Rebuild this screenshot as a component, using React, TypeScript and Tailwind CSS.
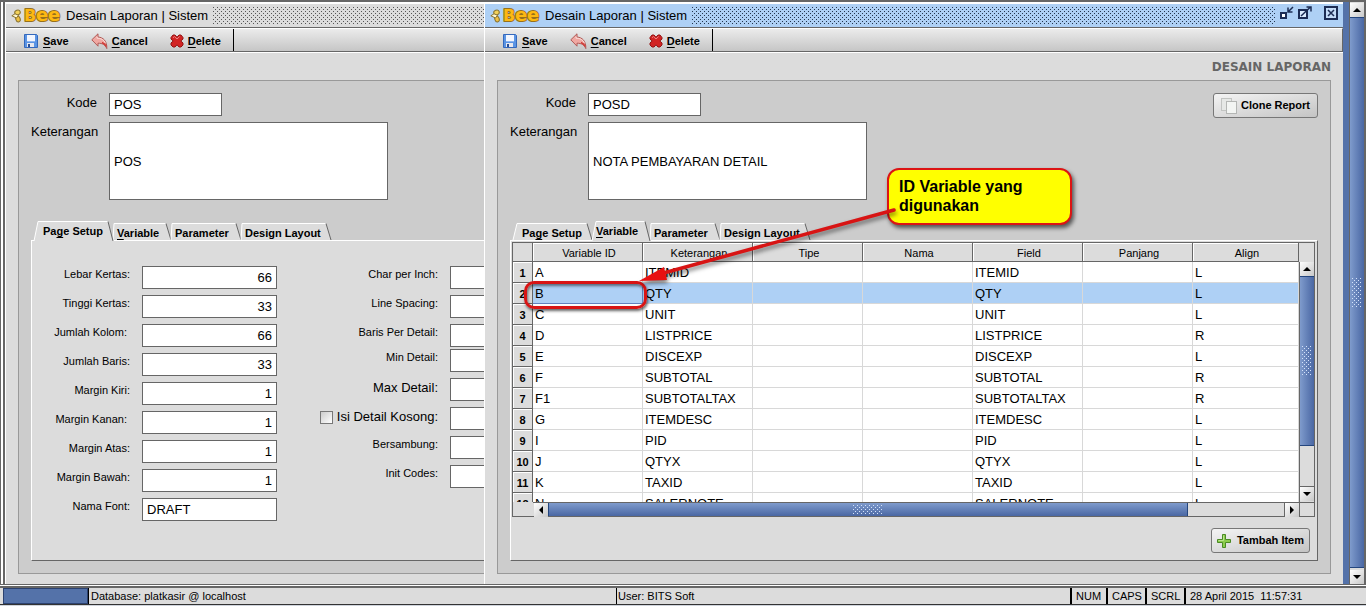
import type { ReactNode } from "react";

/* ---------- data ---------- */

type VariableRow = { id: string; keterangan: string; align: "L" | "R" };

const variables: VariableRow[] = [
  { id: "A", keterangan: "ITEMID", align: "L" },
  { id: "B", keterangan: "QTY", align: "L" },
  { id: "C", keterangan: "UNIT", align: "L" },
  { id: "D", keterangan: "LISTPRICE", align: "R" },
  { id: "E", keterangan: "DISCEXP", align: "L" },
  { id: "F", keterangan: "SUBTOTAL", align: "R" },
  { id: "F1", keterangan: "SUBTOTALTAX", align: "R" },
  { id: "G", keterangan: "ITEMDESC", align: "L" },
  { id: "I", keterangan: "PID", align: "L" },
  { id: "J", keterangan: "QTYX", align: "L" },
  { id: "K", keterangan: "TAXID", align: "L" },
  { id: "N", keterangan: "SALERNOTE", align: "L" },
];

const pageFields = [
  { label: "Lebar Kertas:", value: "66" },
  { label: "Tinggi Kertas:", value: "33" },
  { label: "Jumlah Kolom:\u00a0", value: "66" },
  { label: "Jumlah Baris:", value: "33" },
  { label: "Margin Kiri:", value: "1" },
  { label: "Margin Kanan:\u00a0", value: "1" },
  { label: "Margin Atas:", value: "1" },
  { label: "Margin Bawah:", value: "1" },
];

const tabs = [
  { pre: "Pa", key: "g", post: "e Setup", width: 79, cls: "w-[79px] pl-[9px]" },
  { pre: "", key: "V", post: "ariable", width: 58, cls: "w-[58px] pl-1" },
  { pre: "Parameter", key: "", post: "", width: 70, cls: "w-[70px] pl-1" },
  { pre: "Design Layout", key: "", post: "", width: 90, cls: "w-[90px] pl-1" },
];

/* ---------- icons ---------- */

function BeeLogo() {
  return (
    <svg className="overflow-visible" width="52" height="18" viewBox="0 0 52 18" role="img" aria-label="Bee">
      <g stroke="#8a7430">
        <ellipse cx="6.500" cy="5.500" rx="2.800" ry="2.400" fill="#f3d25a" transform="rotate(-20 6.500 5.500)" />
        <ellipse cx="7" cy="12" rx="2.200" ry="3" fill="#f0c040" transform="rotate(-20 7 12)" />
        <path d="M.8 8.800 4 6.800l3.500 1.400L5.500 11z" fill="#fff6cc" />
      </g>
      <g
        fill="#fcb813"
        stroke="#96701c"
        strokeWidth="2"
        strokeLinejoin="round"
        fontFamily="'DejaVu Sans', sans-serif"
        fontWeight="700"
        style={{ paintOrder: "stroke" }}
      >
        <text x="13" y="14" fontSize="16">B</text>
        <text x="25" y="14" fontSize="18">e</text>
        <text x="37" y="14" fontSize="18">e</text>
      </g>
    </svg>
  );
}

function SaveIcon() {
  return (
    <svg width="16" height="16" viewBox="0 0 16 16" aria-hidden="true">
      <path d="M1.500 1.500h12l1 1v12h-13z" fill="#5a94e4" stroke="#3468bc" />
      <rect x="4" y="2" width="8" height="6" fill="#f2f6ff" />
      <path d="M4 8.500h8" stroke="#8db4ee" />
      <rect x="4" y="10" width="7" height="4" fill="#e8e8ee" />
      <rect x="5" y="11" width="2" height="3" fill="#2a4f96" />
    </svg>
  );
}

function CancelIcon() {
  return (
    <svg width="17" height="17" viewBox="0 0 17 17" aria-hidden="true">
      <path
        d="M7 .8v3.200c5.200.4 9.200 4 8.800 11.600-1.600-3.800-4.200-5.400-8.800-5.400v3L.8 6.800z"
        fill="#f0a8a2"
        stroke="#b05a56"
        strokeLinejoin="round"
      />
      <path d="M6 3.500v1.600c4.200.2 7 1.600 8.400 5" fill="none" stroke="#fbdcd8" />
      <path d="M11 9.500c2.200.8 3.600 2.400 4.300 4" fill="none" stroke="#d03c38" strokeWidth="1.500" />
    </svg>
  );
}

function DeleteIcon() {
  return (
    <svg width="14" height="14" viewBox="0 0 14 14" aria-hidden="true">
      <path
        d="M1 3.500 3 1h2l2 2.200L9 1h2l2 2.500V5l-2.200 2L13 9v2l-2 2H9l-2-2.200L5 13H3l-2-2V9l2.200-2L1 5z"
        fill="#d22424"
        stroke="#921414"
      />
      <path d="M3 3.800l1.400-1.300L7 5l2.600-2.500" fill="none" stroke="#f08080" />
    </svg>
  );
}

function CopyIcon() {
  return (
    <svg width="16" height="16" viewBox="0 0 16 16" aria-hidden="true">
      <rect x=".5" y=".5" width="10" height="12" fill="#e6e8e6" stroke="#c2c4c2" />
      <rect x="5.500" y="3.500" width="10" height="12" fill="#f3f5f3" stroke="#b4b6b4" />
    </svg>
  );
}

function PlusIcon() {
  return (
    <svg width="14" height="14" viewBox="0 0 14 14" aria-hidden="true">
      <path d="M5.500.5h3v5h5v3h-5v5h-3v-5h-5v-3h5z" fill="#8ccc4c" stroke="#4a8a24" />
      <path d="M6.500 1.500v5h-5" fill="none" stroke="#bce490" />
    </svg>
  );
}

function WindowIcons() {
  const btn = "grid h-4 w-4 place-items-center";
  return (
    <div className="flex items-center self-start pr-1 pt-px">
      <button type="button" aria-label="Minimize" className={btn}>
        <svg width="14" height="14" viewBox="0 0 14 14" fill="none" stroke="#1c2c54">
          <rect x="1" y="7" width="5" height="5" strokeWidth="2" fill="#fff" />
          <path d="M13 1 8.500 5.500M8 1.500V6h4.500" strokeWidth="1.500" />
        </svg>
      </button>
      <button type="button" aria-label="Maximize" className={btn + " ml-0.5"}>
        <svg width="14" height="14" viewBox="0 0 14 14" fill="none" stroke="#1c2c54">
          <rect x="1" y="4" width="8" height="8" strokeWidth="2" fill="#dcecff" />
          <path d="M3 10 12.500 1M8.500 1H13v4.500" strokeWidth="1.500" />
        </svg>
      </button>
      <button type="button" aria-label="Close" className={btn + " ml-2.5"}>
        <svg width="14" height="14" viewBox="0 0 14 14" fill="none" stroke="#1c2c54">
          <rect x="1" y="1" width="12" height="12" strokeWidth="2" fill="#c4dcf8" />
          <path d="M4 4l6 6M10 4l-6 6" strokeWidth="1.500" />
        </svg>
      </button>
    </div>
  );
}

function ScrollArrow({ dir, label }: { dir: "up" | "down" | "left" | "right"; label: string }) {
  const d = {
    up: "M0 4h8L4 0z",
    down: "M0 0h8L4 4z",
    left: "M4 0v8L0 4z",
    right: "M0 0v8l4-4z",
  }[dir];
  const vertical = dir === "up" || dir === "down";
  return (
    <button
      type="button"
      aria-label={label}
      className="grid h-[14px] w-[14px] shrink-0 place-items-center bg-gradient-to-br from-white to-[#c8c8c8]"
    >
      <svg width={vertical ? 8 : 4} height={vertical ? 4 : 8} aria-hidden="true">
        <path d={d} fill="#000" />
      </svg>
    </button>
  );
}

/* small dotted grip in the middle of a scrollbar thumb */
const grip =
  "bg-[conic-gradient(at_1px_1px,transparent_75%,#d4e2fa_0),conic-gradient(at_1px_1px,transparent_75%,#d4e2fa_0)] bg-[length:4px_4px] bg-[position:0_0,2px_2px]";

/* ---------- window frame ---------- */

function ToolButton({ icon, hot, rest }: { icon: ReactNode; hot: string; rest: string }) {
  return (
    <button type="button" className="flex items-center gap-1 text-[11px] font-bold">
      {icon}
      <span>
        <span className="underline underline-offset-2">{hot}</span>
        {rest}
      </span>
    </button>
  );
}

function ReportWindow({ active, children }: { active?: boolean; children: ReactNode }) {
  return (
    <section className="flex min-w-[857px] flex-1 flex-col border-l border-t border-white bg-[#dcdcdc]">
      <header
        className={
          "flex h-6 items-center border-b border-[#666] " + (active ? "bg-[#aed0f5]" : "bg-[#dcdcdc]")
        }
      >
        <div className="ml-[5px] flex items-center gap-[3px]">
          <BeeLogo />
          <h1 className="w-[147px] whitespace-nowrap text-[13px] leading-4">Desain Laporan | Sistem</h1>
        </div>
        <div
          className={
            "mr-1 h-[18px] flex-1 bg-[length:4px_4px] bg-[position:0_0,2px_2px] " +
            (active
              ? "bg-[conic-gradient(at_1px_1px,transparent_75%,#24364e_0),conic-gradient(at_1px_1px,transparent_75%,#24364e_0)]"
              : "bg-[conic-gradient(at_1px_1px,transparent_75%,#555_0),conic-gradient(at_1px_1px,transparent_75%,#555_0)]")
          }
        />
        <WindowIcons />
      </header>

      <div className="flex h-6 border-b border-r border-t border-b-[#666] border-r-[#666] border-t-white bg-gradient-to-b from-[#ebebeb] to-[#c6c6c6]">
        <div className="flex items-center gap-[22px] border-r border-black pl-[17px] pr-3 pt-0.5">
          <ToolButton icon={<SaveIcon />} hot="S" rest="ave" />
          <ToolButton icon={<CancelIcon />} hot="C" rest="ancel" />
          <ToolButton icon={<DeleteIcon />} hot="D" rest="elete" />
        </div>
      </div>

      <div className="h-7 border-t border-white px-3">
        {active && (
          <h2 className="text-right font-['DejaVu_Sans',sans-serif] text-[12px] font-bold leading-7 text-[#666]">
            DESAIN LAPORAN
          </h2>
        )}
      </div>
      {children}
    </section>
  );
}

const fieldCls = "h-[23px] border border-[#666] bg-white px-1 text-[13px] outline-none";

type FormProps = {
  prefix: string;
  kode: string;
  keterangan: string;
  activeTab: number;
  clone?: boolean;
  children: ReactNode;
};

function ReportForm({ prefix, kode, keterangan, activeTab, clone, children }: FormProps) {
  return (
    <div className="relative mx-3 mb-2.5 flex flex-1 flex-col border border-[#999] bg-[#ccc] p-3">
      <div className="flex items-start justify-between">
        <div className="grid grid-cols-[66px_279px] gap-x-3 gap-y-1.5 text-[13px]">
          <label htmlFor={prefix + "-kode"} className="h-5 text-right leading-5">
            Kode
          </label>
          <input id={prefix + "-kode"} defaultValue={kode} className={fieldCls + " w-[113px]"} />
          <label htmlFor={prefix + "-ket"} className="h-5 text-right leading-5">
            Keterangan
          </label>
          <input
            id={prefix + "-ket"}
            defaultValue={keterangan}
            className="h-[78px] border border-[#666] bg-white px-1 text-[13px] outline-none"
          />
        </div>
        {clone && (
          <button
            type="button"
            className="flex h-[25px] items-center gap-1 rounded-[3px] border border-[#777] bg-gradient-to-br from-[#f4f4f4] to-[#c4c4c4] px-[7px] text-[11px] font-bold"
          >
            <CopyIcon />
            Clone Report
          </button>
        )}
      </div>

      <div role="tablist" className="ml-[3px] mt-[21px] flex h-5">
        {tabs.map((t, i) => (
          <Tab key={t.width} index={i} active={i === activeTab} />
        ))}
      </div>
      <div className="-mt-px flex flex-1 flex-col border border-b-[#666] border-l-white border-r-[#666] border-t-white bg-[#dcdcdc]">
        {children}
      </div>
    </div>
  );
}

function Tab({ index, active }: { index: number; active: boolean }) {
  const { pre, key, post, width: w, cls } = tabs[index];
  const top = active ? 0.5 : 2.5;
  const bottom = active ? 20 : 19;
  const left = index === 0 || active ? 4 : 1;
  return (
    <button
      type="button"
      role="tab"
      aria-selected={active}
      className={
        "relative whitespace-nowrap text-left text-[11px] font-bold leading-5 " + cls + (active ? " z-10" : " pt-0.5")
      }
    >
      <svg className="absolute inset-0 overflow-visible" width={w} height="20" aria-hidden="true">
        <path d={`M0 ${bottom}L${left} ${top}H${w - 5}L${w} ${bottom}z`} fill="#dcdcdc" />
        <path d={`M0 ${bottom}L${left} ${top}H${w - 5}`} fill="none" stroke="#fff" />
        <path d={`M${w - 5} ${top}L${w} ${bottom}`} fill="none" stroke="#666" />
      </svg>
      <span className="relative">
        {pre}
        {key && <span className="underline underline-offset-2">{key}</span>}
        {post}
      </span>
    </button>
  );
}

/* ---------- "Page Setup" tab ---------- */

function SideField({ id, label, big, check }: { id: string; label: string; big?: boolean; check?: boolean }) {
  return (
    <div className="flex gap-3">
      <div className={"flex w-[161px] items-center justify-end gap-1 " + (big ? "h-5" : "h-4")}>
        {check && (
          <input
            type="checkbox"
            aria-label="Isi Detail Kosong"
            className="h-[13px] w-[13px] appearance-none border border-[#777] bg-gradient-to-br from-[#ccc] to-white"
          />
        )}
        <label htmlFor={id} className={"whitespace-nowrap " + (big ? "text-[13px]" : "text-[11px]")}>
          {label}
        </label>
      </div>
      <input id={id} className={fieldCls + " w-[135px]"} />
    </div>
  );
}

function PageSetup() {
  return (
    <div className="flex flex-1 pb-[39px] pt-[25px]">
      <div className="flex flex-col gap-1.5">
        {pageFields.map((f, i) => (
          <div key={f.label} className="flex gap-3">
            <label htmlFor={"page-" + i} className="h-4 w-[98px] text-right text-[11px] leading-4">
              {f.label}
            </label>
            <input id={"page-" + i} defaultValue={f.value} className={fieldCls + " w-[135px] text-right"} />
          </div>
        ))}
        <div className="flex gap-3">
          <label htmlFor="font" className="h-4 w-[98px] text-right text-[11px] leading-4">
            Nama Font:
          </label>
          <input id="font" defaultValue="DRAFT" className={fieldCls + " w-[135px]"} />
        </div>
      </div>

      <div className="flex flex-col gap-0.5">
        <div className="flex flex-col gap-1.5">
          <SideField id="cpi" label="Char per Inch:" />
          <SideField id="spacing" label="Line Spacing:" />
          <SideField id="baris" label="Baris Per Detail:" />
        </div>
        <div className="flex flex-col gap-1.5">
          <SideField id="min" label="Min Detail:" />
          <SideField id="max" label="Max Detail:" big />
          <SideField id="kosong" label="Isi Detail Kosong:" big check />
          <SideField id="bersambung" label="Bersambung:" />
          <SideField id="init" label="Init Codes:" />
        </div>
      </div>
    </div>
  );
}

/* ---------- "Variable" tab ---------- */

const headings = ["Variable ID", "Keterangan", "Tipe", "Nama", "Field", "Panjang", "Align"];

function VariableTable() {
  return (
    <div className="border border-[#666]">
      <div className="flex h-[259px]">
        <div className="flex-1 overflow-hidden">
          <table className="w-full table-fixed border-separate border-spacing-0">
            <colgroup>
              <col className="w-5" />
              <col className="w-[110px]" />
              <col className="w-[110px]" />
              <col className="w-[110px]" />
              <col className="w-[110px]" />
              <col className="w-[110px]" />
              <col className="w-[110px]" />
              <col />
            </colgroup>
            <thead>
              <tr className="h-[19px] bg-[#dcdcdc] text-[11px]">
                <td className="border-b border-r border-[#666] p-0" />
                {headings.map((h) => (
                  <th
                    key={h}
                    scope="col"
                    className="border-b border-r border-[#666] pb-0 pl-[3px] pr-0 pt-0.5 font-normal leading-4 shadow-[inset_1px_1px_0_#fff]"
                  >
                    {h}
                  </th>
                ))}
              </tr>
            </thead>
            <tbody>
              {variables.map((v, i) => (
                <tr key={v.id} className={"h-[21px] text-[13px] " + (i === 1 ? "bg-[#aed0f5]" : "bg-white")}>
                  <th
                    scope="row"
                    className="border-b border-r border-[#666] bg-[#dcdcdc] px-0 pb-0 pt-0.5 text-[11px] font-bold leading-[18px] shadow-[inset_1px_1px_0_#fff]"
                  >
                    {i + 1}
                  </th>
                  {[v.id, v.keterangan, "", "", v.keterangan, "", v.align].map((text, c) => (
                    <td
                      key={c}
                      className={
                        "border-b border-r pb-0 pl-0.5 pr-0 pt-0.5 leading-[18px] " +
                        (i === 1 && c === 0 ? "border-[#6382bf]" : "border-[#d8d8d8]")
                      }
                    >
                      {text}
                    </td>
                  ))}
                </tr>
              ))}
            </tbody>
          </table>
        </div>

        <div className="flex w-[15px] flex-col pt-[19px]">
          <div className="flex flex-1 flex-col border-l border-[#666]">
            <ScrollArrow dir="up" label="Scroll up" />
            <div className="grid h-[170px] place-items-center border-y border-[#24467e] bg-gradient-to-r from-[#7f9bcc] to-[#4a67a3]">
              <div className={"h-[30px] w-2.5 " + grip} />
            </div>
            <div className="flex-1 border-b border-[#666]" />
            <ScrollArrow dir="down" label="Scroll down" />
            <div className="h-px" />
          </div>
        </div>
      </div>

      <div className="flex h-[14px]">
        <div className="w-5" />
        <div className="flex flex-1 border-t border-[#666] pl-px">
          <ScrollArrow dir="left" label="Scroll left" />
          <div className="grid w-[640px] place-items-center border-x border-[#24467e] bg-gradient-to-b from-[#7f9bcc] to-[#4a67a3]">
            <div className={"h-2.5 w-[30px] " + grip} />
          </div>
          <div className="flex-1 border-r border-[#666]" />
          <ScrollArrow dir="right" label="Scroll right" />
        </div>
        <div className="w-[15px] border-l border-t border-[#666]" />
      </div>
    </div>
  );
}

function Annotation() {
  return (
    <>
      <div className="pointer-events-none absolute left-[26px] top-[200px] h-[28px] w-[123px] rounded-[10px] border-3 border-[#d81414] shadow-[1px_2px_3px_rgba(0,0,0,0.6),inset_1px_2px_3px_rgba(0,0,0,0.5)]" />
      <div className="pointer-events-none absolute left-[389px] top-[87px] h-[57px] w-[185px] rounded-[12px] border-2 border-[#dc1414] bg-[#ffff00] pl-2.5 pt-[7px] text-[16px] font-bold leading-[19px] shadow-[2px_3px_4px_rgba(0,0,0,0.6)]">
        ID Variable yang
        <br />
        digunakan
      </div>
      <svg
        className="pointer-events-none absolute left-[138px] top-[120px] drop-shadow-[1px_3px_2px_rgba(0,0,0,0.5)]"
        width="264"
        height="90"
        aria-hidden="true"
      >
        <path d="M258 9 24 73" stroke="#d81414" strokeWidth="3.500" strokeLinecap="round" />
        <path d="M3 80 28 66 31 79z" fill="#e81010" />
      </svg>
    </>
  );
}

/* ---------- status bar ---------- */

function StatusBar() {
  const cell = "border-l-2 border-black pl-1";
  return (
    <footer className="mt-px flex h-[18px] items-stretch border-t-2 border-[#666] bg-[#dcdcdc] pl-[3px] text-[11px] leading-4">
      <div className="w-[85px] border border-[#2c4270] bg-[#5472a9]" />
      <div className="w-[528px] border-l border-black pl-0.5">Database: platkasir @ localhost</div>
      <div className="flex-1 border-l border-black pl-px">User: BITS Soft</div>
      <div className={cell + " w-9"}>NUM</div>
      <div className={cell + " w-[39px]"}>CAPS</div>
      <div className={cell + " w-[39px]"}>SCRL</div>
      <div className={cell + " w-[182px] whitespace-pre"}>{"28 April 2015  11:57:31"}</div>
    </footer>
  );
}

export default function App() {
  return (
    <div className="flex min-h-screen flex-col overflow-hidden bg-white font-['Liberation_Sans',Arial,sans-serif] text-black">
      <div className="h-0.5 bg-[#666]" />
      <main className="flex flex-1 border-b border-[#666]">
        <div className="w-[5px] border-l border-r-2 border-[#666] bg-white" />
        <div className="flex w-[479px] shrink-0 overflow-hidden pt-px">
          <ReportWindow>
            <ReportForm prefix="pos" kode="POS" keterangan="POS" activeTab={0}>
              <PageSetup />
            </ReportForm>
          </ReportWindow>
        </div>
        <div className="flex flex-1 pt-px">
          <ReportWindow active>
            <ReportForm prefix="posd" kode="POSD" keterangan="NOTA PEMBAYARAN DETAIL" activeTab={1} clone>
              <div className="flex flex-1 flex-col pl-px pr-0.5 pt-px">
                <VariableTable />
                <button
                  type="button"
                  className="mr-[5px] mt-[11px] flex h-[25px] items-center gap-1.5 self-end rounded-[3px] border border-[#777] bg-gradient-to-br from-[#f4f4f4] to-[#c4c4c4] px-[5px] text-[11px] font-bold"
                >
                  <PlusIcon />
                  Tambah Item
                </button>
              </div>
              <Annotation />
            </ReportForm>
          </ReportWindow>
        </div>

        <div className="w-1.5 bg-[#5472a9]" />
        <div className="flex w-[17px] flex-col border-l border-r-2 border-[#666] bg-[#dcdcdc] pt-px">
          <ScrollArrow dir="up" label="Scroll page up" />
          <div className="grid flex-1 place-items-center border-y border-[#24467e] bg-gradient-to-r from-[#7f9bcc] to-[#4a67a3]">
            <div className={"h-[30px] w-2.5 " + grip} />
          </div>
          <div className="h-0.5" />
          <ScrollArrow dir="down" label="Scroll page down" />
        </div>
      </main>
      <StatusBar />
      <div className="h-0.5 border-t border-[#333] bg-[#cfd4dc]" />
    </div>
  );
}
